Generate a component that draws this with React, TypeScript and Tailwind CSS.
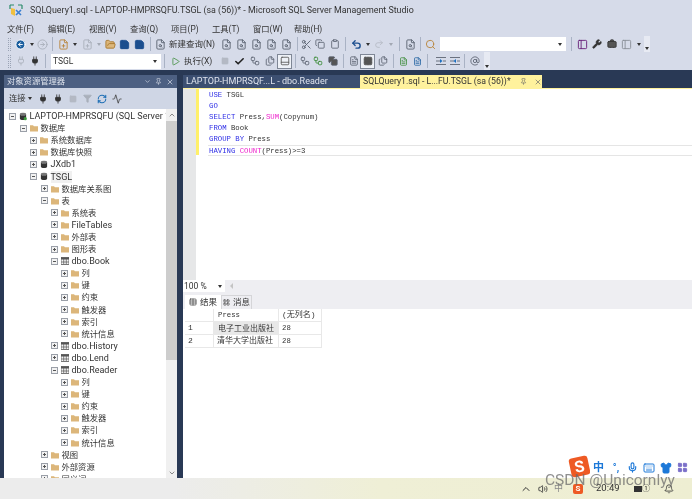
import {
  Activity, AtSign, Bell, Briefcase, Check, ChevronDown, ChevronUp, CircleArrowLeft, CircleArrowRight, Clipboard, Copy, FilePlus,
  FileSearch, FileText, Files, Filter, FolderOpen, Keyboard, LayoutGrid, Mic, PanelBottom, PanelLeft, Pin, Play, Plug, Redo2, RefreshCw, Save, Scissors, Search,
  Shirt, Square, Table, Undo2, Volume2, Workflow, Wrench, X,
} from "lucide-react";
import type { ReactNode } from "react";

const uiFont = "font-['Roboto','Noto_Sans_CJK_SC',sans-serif]";
const codeFont = "font-['Liberation_Mono','Noto_Sans_CJK_SC',monospace]";

const menus = ["文件(F)", "编辑(E)", "视图(V)", "查询(Q)", "项目(P)", "工具(T)", "窗口(W)", "帮助(H)"];

type Node = { level: number; kind: "folder" | "db" | "table" | "server"; label: string; open?: boolean; hl?: boolean };

const sub: Node[] = ["列", "键", "约束", "触发器", "索引", "统计信息"].map((label) => ({ level: 5, kind: "folder", label }));

const tree: Node[] = [
  { level: 0, kind: "server", label: "LAPTOP-HMPRSQFU (SQL Server 1", open: true },
  { level: 1, kind: "folder", label: "数据库", open: true },
  { level: 2, kind: "folder", label: "系统数据库" },
  { level: 2, kind: "folder", label: "数据库快照" },
  { level: 2, kind: "db", label: "JXdb1" },
  { level: 2, kind: "db", label: "TSGL", open: true, hl: true },
  { level: 3, kind: "folder", label: "数据库关系图" },
  { level: 3, kind: "folder", label: "表", open: true },
  { level: 4, kind: "folder", label: "系统表" },
  { level: 4, kind: "folder", label: "FileTables" },
  { level: 4, kind: "folder", label: "外部表" },
  { level: 4, kind: "folder", label: "图形表" },
  { level: 4, kind: "table", label: "dbo.Book", open: true },
  ...sub,
  { level: 4, kind: "table", label: "dbo.History" },
  { level: 4, kind: "table", label: "dbo.Lend" },
  { level: 4, kind: "table", label: "dbo.Reader", open: true },
  ...sub,
  { level: 3, kind: "folder", label: "视图" },
  { level: 3, kind: "folder", label: "外部资源" },
  { level: 3, kind: "folder", label: "同义词" },
];

const indents = ["pl-[5px]", "pl-[16px]", "pl-[26px]", "pl-[37px]", "pl-[47px]", "pl-[57px]"];

function Grip() {
  return <div className="w-[3px] h-[13px] mx-[3px] border-x border-dotted border-[#9aa3b5]" />;
}

function Sep() {
  return <div className="w-px h-[14px] mx-[3px] bg-[#a9b2c4]" />;
}

function Tool({ children, w = "w-[15px]" }: { children?: ReactNode; w?: string }) {
  return <div className={`${w} h-[15px] flex items-center justify-center shrink-0 text-[#5a6270]`}>{children}</div>;
}

function Drop({ dim, w = "w-[9px]" }: { dim?: boolean; w?: string }) {
  return (
    <div className={`${w} flex justify-center shrink-0`}>
      <div className={`border-x-[2.5px] border-t-[3px] border-x-transparent ${dim ? "border-t-[#a3a8b3]" : "border-t-[#333]"}`} />
    </div>
  );
}

function Selected({ children }: { children: ReactNode }) {
  return <div className="w-[15px] h-[15px] flex items-center justify-center shrink-0 border border-[#7f8796] bg-[#eef1f7] text-[#555]">{children}</div>;
}

function IndentIcon({ flip }: { flip?: boolean }) {
  return (
    <svg width="12" height="10" viewBox="0 0 12 10">
      <path d="M1 1.5h10M1 8.5h10" stroke="#6b7280" strokeWidth="1" />
      <path d="M1 5h4M8 5h3" stroke="#6b7280" strokeWidth="1" />
      <path d={flip ? "M7 3L4.5 5 7 7z" : "M5 3l2.5 2L5 7z"} fill="#1c6fc0" />
    </svg>
  );
}

function FolderIcon() {
  return (
    <svg width="8" height="8" viewBox="0 0 9 8" className="shrink-0">
      <path d="M0 1h3.4l1 1H9v6H0z" fill="#dcb67a" />
    </svg>
  );
}

function TableIcon() {
  return (
    <svg width="8" height="8" viewBox="0 0 8 8" className="shrink-0">
      <rect x="0" y="0.5" width="8" height="7" fill="#f4f4f4" stroke="#555" strokeWidth="0.8" />
      <rect x="0" y="0.5" width="8" height="2" fill="#555" />
      <path d="M2.7 1v6M5.3 1v6M0 5h8" stroke="#555" strokeWidth="0.7" />
    </svg>
  );
}

function NodeIcon({ kind }: { kind: Node["kind"] }) {
  if (kind === "folder") return <FolderIcon />;
  if (kind === "table") return <TableIcon />;
  return (
    <svg width="8" height="9" viewBox="0 0 9 9" className="shrink-0">
      <ellipse cx="4.5" cy="2" rx="3.5" ry="1.6" fill="#777" />
      <path d="M1 2v5c0 2 7 2 7 0V2c0 2-7 2-7 0z" fill="#333" />
      {kind === "server" && <circle cx="7" cy="7" r="1.8" fill="#3a9a3a" />}
    </svg>
  );
}

function Expander({ open }: { open?: boolean }) {
  return (
    <div className="relative w-[7px] h-[7px] shrink-0 border border-[#9a9fa8] bg-[#f2f2f2]">
      <div className="absolute left-px right-px top-[2px] h-px bg-[#555]" />
      {!open && <div className="absolute top-px bottom-px left-[2px] w-px bg-[#555]" />}
    </div>
  );
}

function TreeRow({ node }: { node: Node }) {
  // chinese labels run narrower than the latin ones in the original
  const size = /[^\x00-\x7f]/.test(node.label) ? "text-[8.3px]" : "text-[9px]";
  return (
    <div className={`h-[12.1px] flex items-center ${indents[node.level]}`}>
      <Expander open={node.open} />
      <div className="w-[3px] shrink-0" />
      <NodeIcon kind={node.kind} />
      <span className={`ml-[2.5px] ${size} leading-[12px] whitespace-nowrap text-[#333] ${node.hl ? "bg-[#f0f0f0]" : ""}`}>{node.label}</span>
    </div>
  );
}

function ObjectExplorer() {
  return (
    <aside className="w-[173px] shrink-0 flex flex-col bg-white overflow-hidden">
      <div className="h-[13px] px-[3px] flex items-center bg-[#4d6082] text-[#dde2ec] text-[8.3px] leading-[13px]">
        <span className="flex-1">对象资源管理器</span>
        <ChevronDown size={7} />
        <Pin size={7} className="ml-[4px]" />
        <X size={8} className="ml-[4px]" />
      </div>
      <div className="h-[21px] px-[5px] flex items-center bg-[#cfd6e5] text-[8.3px] text-[#333]">
        <span>连接</span>
        <Drop />
        <Plug size={10} fill="#333" className="ml-[3px] text-[#333]" />
        <Plug size={10} fill="#333" className="ml-[5px] text-[#333]" />
        <Square size={8} fill="#b4b9c4" className="ml-[6px] text-[#b4b9c4]" />
        <Filter size={9} fill="#aab0bb" className="ml-[6px] text-[#aab0bb]" />
        <RefreshCw size={10} strokeWidth={2.5} className="ml-[5px] text-[#1e6fb5]" />
        <Activity size={10} className="ml-[5px] text-[#444]" />
      </div>
      <div className="flex-1 flex min-h-0">
        <div className="flex-1 min-w-0 overflow-hidden pt-px">
          {tree.map((node, i) => (
            <TreeRow key={i} node={node} />
          ))}
        </div>
        <div className="w-[11px] shrink-0 flex flex-col items-center bg-[#f0f0f0]">
          <ChevronUp size={8} className="my-[2px] text-[#555]" />
          <div className="w-full h-[239px] bg-[#cdcdcd]" />
          <div className="flex-1" />
          <ChevronDown size={8} className="my-[1px] text-[#555]" />
        </div>
      </div>
    </aside>
  );
}

function K({ children }: { children: ReactNode }) {
  return <span className="text-[#2f2fe6]">{children}</span>;
}

function F({ children }: { children: ReactNode }) {
  return <span className="text-[#ee22cc]">{children}</span>;
}

function Line({ children, current }: { children: ReactNode; current?: boolean }) {
  return (
    <div className={`h-[11px] pl-[1px] whitespace-pre text-[7.3px] leading-[10px] text-[#333] ${current ? "border-y border-[#e5e5e5] box-border leading-[9px]" : ""}`}>
      {children}
    </div>
  );
}

function Editor() {
  return (
    <div className="flex h-[191px] bg-white">
      <div className="w-[13px] bg-[#e6e7e8]" />
      <div className="w-[3px] h-[66px] bg-[#fff06a]" />
      <div className={`ml-[9px] flex-1 pt-[1px] ${codeFont}`}>
        <Line><K>USE</K> TSGL</Line>
        <Line><K>GO</K></Line>
        <Line><K>SELECT</K> Press,<F>SUM</F>(Copynum)</Line>
        <Line><K>FROM</K> Book</Line>
        <Line><K>GROUP BY</K> Press</Line>
        <Line current><K>HAVING</K> <F>COUNT</F>(Press)&gt;=3</Line>
      </div>
    </div>
  );
}

function GridCell({ w, children, sel }: { w: string; children?: ReactNode; sel?: boolean }) {
  return (
    <div className={`${w} h-[13px] px-[3px] flex items-center border-r border-b border-[#e8e8e8] text-[8px] whitespace-nowrap text-[#333] ${sel ? "bg-[#e8e8e8] border border-[#888] box-border" : ""}`}>
      {children}
    </div>
  );
}

function Results() {
  return (
    <div className="flex-1 min-h-0 flex flex-col bg-[#eeeef2]">
      <div className="h-[12px] flex items-center">
        <div className="w-[42px] h-[12px] px-[1px] flex items-center justify-between bg-white text-[8.5px] text-[#333]">
          100 %
          <Drop />
        </div>
        <div className="ml-[5px] border-y-[3px] border-r-[3px] border-y-transparent border-r-[#c4c4c4]" />
      </div>
      <div className="h-[17px] pt-[3px] pl-[2px] flex text-[8.5px] text-[#333]">
        <div className="w-[36px] flex items-center justify-center gap-[3px] bg-white">
          <Table size={8} /> 结果
        </div>
        <div className="w-[31px] flex items-center justify-center gap-[3px] bg-[#eeeef2] border border-b-0 border-[#d5d5d8]">
          <LayoutGrid size={7} /> 消息
        </div>
      </div>
      <div className={`flex-1 bg-white pl-[2px] ${codeFont}`}>
        <div className="flex"><GridCell w="w-[29px]" /><GridCell w="w-[65px]"><span className="ml-[1px] text-[7.3px]">Press</span></GridCell><GridCell w="w-[43px]">(无列名)</GridCell></div>
        <div className="flex"><GridCell w="w-[29px]">1</GridCell><GridCell w="w-[65px]" sel>电子工业出版社</GridCell><GridCell w="w-[43px]"><span className="text-[7.3px]">28</span></GridCell></div>
        <div className="flex"><GridCell w="w-[29px]">2</GridCell><GridCell w="w-[65px]">清华大学出版社</GridCell><GridCell w="w-[43px]"><span className="text-[7.3px]">28</span></GridCell></div>
      </div>
    </div>
  );
}

function Toolbars() {
  return (
    <div className="text-[8.5px] text-[#333]">
      <div className="h-[16px] flex items-center pl-[5px]">
        <Grip />
        <Tool w="w-[13px]"><CircleArrowLeft size={11} fill="#1c5f9f" className="text-white" /></Tool>
        <Drop />
        <Tool w="w-[13px]"><CircleArrowRight size={11} className="text-[#aab0bb]" /></Tool>
        <Sep />
        <Tool w="w-[14px]"><FilePlus size={11} className="text-[#b9853b]" /></Tool>
        <Drop w="w-[10px]" />
        <Tool w="w-[14px]"><FilePlus size={11} className="text-[#aab0bb]" /></Tool>
        <Drop dim w="w-[10px]" />
        <Tool w="w-[13px]"><FolderOpen size={11} fill="#dcb67a" className="text-[#a9782f]" /></Tool>
        <Tool><Save size={11} fill="#1c4f8f" className="text-[#1c4f8f]" /></Tool>
        <Tool><Save size={11} fill="#1c4f8f" className="text-[#1c4f8f]" /></Tool>
        <Sep />
        <Tool w="w-[13px]"><FileSearch size={11} /></Tool>
        <span className="ml-[2px] w-[50px] whitespace-nowrap">新建查询(N)</span>
        <Tool><FileSearch size={11} /></Tool>
        <Tool><FileSearch size={11} /></Tool>
        <Tool><FileSearch size={11} /></Tool>
        <Tool><FileSearch size={11} /></Tool>
        <Tool><FileSearch size={11} /></Tool>
        <Sep />
        <Tool w="w-[11px]"><Scissors size={11} /></Tool>
        <Tool><Copy size={10} /></Tool>
        <Tool><Clipboard size={10} /></Tool>
        <Sep />
        <Tool w="w-[14px]"><Undo2 size={11} strokeWidth={3} className="text-[#1c4f8f]" /></Tool>
        <Drop />
        <Tool w="w-[13px]"><Redo2 size={10} className="text-[#b4b9c4]" /></Tool>
        <Drop dim w="w-[11px]" />
        <Sep />
        <Tool w="w-[14px]"><FileSearch size={11} /></Tool>
        <Sep />
        <Tool w="w-[12px]"><Search size={11} className="text-[#b9853b]" /></Tool>
        <div className="w-[126px] h-[14px] flex items-center justify-end pr-[2px] bg-white ml-[4px]"><Drop /></div>
        <div className="w-[2px]" />
        <Sep />
        <Tool w="w-[14px]"><PanelLeft size={11} className="text-[#68217a]" /></Tool>
        <Tool><Wrench size={10} fill="#333" className="text-[#333]" /></Tool>
        <Tool><Briefcase size={10} fill="#555" className="text-[#333]" /></Tool>
        <Tool><PanelLeft size={11} className="text-[#8a8f98]" /></Tool>
        <Drop />
        <div className="ml-px w-[6px] h-[16px] flex items-end justify-center pb-[2px] bg-[#e7eaf3]"><Drop w="w-[6px]" /></div>
      </div>
      <div className="h-[18px] flex items-center pl-[5px]">
        <Grip />
        <Tool w="w-[14px]"><Plug size={10} className="text-[#aab0bb]" /></Tool>
        <Tool w="w-[14px]"><Plug size={10} fill="#333" className="text-[#333]" /></Tool>
        <Sep />
        <div className={`w-[110px] h-[15px] px-[2px] flex items-center justify-between bg-white ml-[2px] ${uiFont} text-[8.5px]`}>
          TSGL
          <Drop />
        </div>
        <Sep />
        <Tool w="w-[14px]"><Play size={9} className="text-[#388a34]" /></Tool>
        <span className="ml-[2px] w-[33px] whitespace-nowrap">执行(X)</span>
        <Tool><Square size={8} fill="#b4b9c4" className="text-[#b4b9c4]" /></Tool>
        <Tool><Check size={11} strokeWidth={3.5} className="text-[#222]" /></Tool>
        <Tool><Workflow size={10} /></Tool>
        <Tool><Files size={10} /></Tool>
        <Selected><PanelBottom size={10} /></Selected>
        <Sep />
        <Tool w="w-[11px]"><Workflow size={10} /></Tool>
        <Tool><Workflow size={10} className="text-[#388a34]" /></Tool>
        <Tool><Copy size={10} fill="#555" /></Tool>
        <Sep />
        <Tool w="w-[13px]"><FileText size={10} /></Tool>
        <Selected><Table size={10} fill="#555" /></Selected>
        <Tool><Files size={10} /></Tool>
        <Sep />
        <Tool w="w-[13px]"><FileText size={9} className="text-[#388a34]" /></Tool>
        <Tool w="w-[14px]"><FileText size={9} className="text-[#1c5f9f]" /></Tool>
        <Sep />
        <div className="w-[2px]" />
        <Tool w="w-[15px]"><IndentIcon /></Tool>
        <Tool w="w-[13px]"><IndentIcon flip /></Tool>
        <Sep />
        <Tool w="w-[13px]"><AtSign size={10} /></Tool>
        <div className="ml-[3px] w-[6px] h-[18px] flex items-end justify-center pb-[2px] bg-[#e7eaf3]"><Drop w="w-[6px]" /></div>
      </div>
    </div>
  );
}

function Taskbar() {
  return (
    <footer className="relative h-[21px] shrink-0 flex items-center bg-[linear-gradient(90deg,#ececec_0%,#ececec_25%,#efefd6_55%,#eeeed2_100%)] text-[#333]">
      <div className="flex-1" />
      <ChevronUp size={12} className="text-[#333] mr-[6px]" />
      <Volume2 size={10} className="mr-[6px]" />
      <span className="w-[9px] text-[9px] text-[#888] mr-[10px]">中</span>
      <div className="w-[10px] h-[10px] rounded-[2px] mr-[13px] bg-[#ee5a24] text-white text-[8px] leading-[10px] text-center font-bold">S</div>
      <span className="text-[9.5px] w-[22px] mr-[16px] whitespace-nowrap">20:49</span>
      <div className="w-[8px] h-[6px] bg-[#333]" />
      <span className="w-[9px] text-[8px] leading-[9px]">①</span>
      <Bell size={10} className="ml-[13px] mr-[18px]" />
    </footer>
  );
}

export default function App() {
  return (
    <div className={`relative w-[692px] h-[499px] overflow-hidden flex flex-col bg-[#d6dbe9] blur-[0.3px] ${uiFont}`}>
      <header className="h-[22px] flex items-center pl-[9px] shrink-0">
        <svg width="14" height="14" viewBox="0 0 14 14" className="shrink-0">
          <path d="M1 1h4M1 1v4M13 1H9M13 1v4" stroke="#2a8a6a" strokeWidth="1.2" fill="none" />
          <path d="M2 4l4 1v7l-4-2z" fill="#f0c040" />
          <path d="M7 6l5 5M12 6l-5 5" stroke="#3a7fd0" strokeWidth="1.6" />
        </svg>
        <span className="ml-[7px] text-[8.9px] text-[#333] whitespace-nowrap">SQLQuery1.sql - LAPTOP-HMPRSQFU.TSGL (sa (56))* - Microsoft SQL Server Management Studio</span>
      </header>
      <nav className="h-[14px] shrink-0 flex items-center pl-[7px] text-[8.3px] text-[#333]">
        {menus.map((m) => (
          <span key={m} className="w-[41px] whitespace-nowrap">{m}</span>
        ))}
      </nav>
      <Toolbars />
      <main className="flex-1 min-h-0 flex gap-[6px] bg-[#293955] pt-[5px] pl-[4px]">
        <ObjectExplorer />
        <section className="flex-1 min-w-0 flex flex-col">
          <div className="h-[13px] shrink-0 flex leading-[13px]">
            <div className="w-[177px] pl-[3px] bg-[#3c4f71] text-[9px] text-[#dfe4ee] whitespace-nowrap">LAPTOP-HMPRSQF...L - dbo.Reader</div>
            <div className="w-[182px] pl-[3px] flex items-center bg-[#fff29d] text-[8.7px] text-[#333] whitespace-nowrap">
              SQLQuery1.sql - L...FU.TSGL (sa (56))*
              <Pin size={7} className="ml-[9px] text-[#666]" />
              <X size={8} className="ml-[7px] text-[#666]" />
            </div>
          </div>
          <div className="h-px shrink-0 bg-[#fff29d]" />
          <Editor />
          <Results />
        </section>
      </main>
      <Taskbar />
      <div className="absolute left-[570px] top-[457px] w-[19px] h-[19px] rounded-[3px] -rotate-12 bg-[#ee5a24] text-white text-[16px] leading-[19px] text-center font-bold">S</div>
      <div className="absolute left-[590px] top-[459px] w-[102px] h-[17px] flex items-center gap-[5px] pl-[3px] bg-white text-[#1c78d8]">
        <span className="w-[12px] text-[11px] leading-[14px] font-bold">中</span>
        <span className="w-[12px] text-[10px] leading-[10px] font-bold text-center">°,</span>
        <Mic size={11} strokeWidth={2.5} />
        <Keyboard size={12} />
        <Shirt size={12} fill="#1c78d8" />
        <LayoutGrid size={11} fill="#7a6fc8" className="text-[#7a6fc8]" />
      </div>
      <div className="absolute left-[545px] top-[471px] text-[15.5px] leading-[19px] text-[#6b6b6b]/75 whitespace-nowrap">CSDN @Unicornlyy</div>
    </div>
  );
}
